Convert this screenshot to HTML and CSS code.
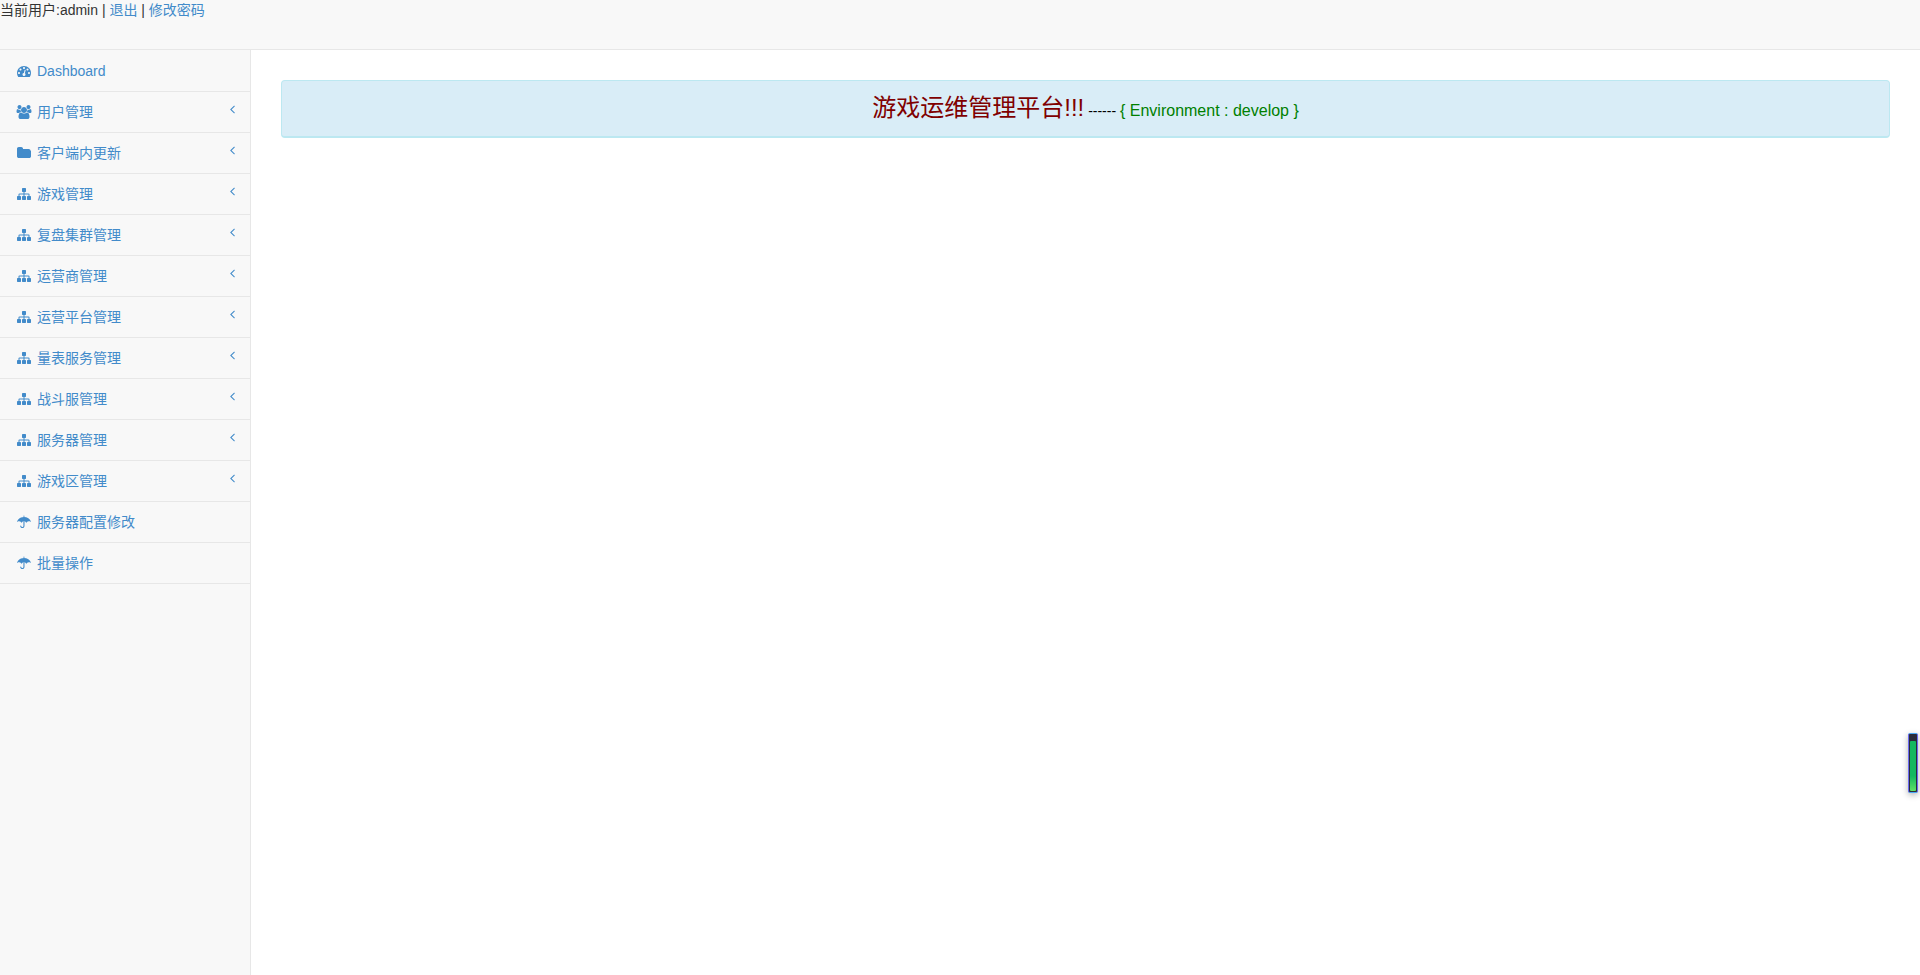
FILE: index.html
```html
<!DOCTYPE html>
<html lang="zh-CN">
<head>
<meta charset="utf-8">
<title>游戏运维管理平台</title>
<link rel="stylesheet" href="styles.css">
</head>
<body>
<svg class="sprite" aria-hidden="true">
  <symbol id="i-dashboard" viewBox="0 0 1792 1792"><path d="M384 1152q0-53-37.5-90.5t-90.5-37.5-90.5 37.5-37.5 90.5 37.5 90.5 90.5 37.5 90.5-37.5 37.5-90.5zm192-448q0-53-37.5-90.5t-90.5-37.5-90.5 37.5-37.5 90.5 37.5 90.5 90.5 37.5 90.5-37.5 37.5-90.5zm428 481l101-382q6-26-7.5-48.5t-38.5-29.5-48 6.5-30 39.5l-101 382q-60 5-107 43.5t-63 98.5q-20 77 20 146t117 89 146-20 89-117q16-60-6-117t-72-91zm660-33q0-53-37.5-90.5t-90.5-37.5-90.5 37.5-37.5 90.5 37.5 90.5 90.5 37.5 90.5-37.5 37.5-90.5zm-640-640q0-53-37.5-90.5t-90.5-37.5-90.5 37.5-37.5 90.5 37.5 90.5 90.5 37.5 90.5-37.5 37.5-90.5zm448 192q0-53-37.5-90.5t-90.5-37.5-90.5 37.5-37.5 90.5 37.5 90.5 90.5 37.5 90.5-37.5 37.5-90.5zm320 448q0 261-141 483-19 29-54 29h-1402q-35 0-54-29-141-221-141-483 0-182 71-348t191-286 286-191 348-71 348 71 286 191 191 286 71 348z"/></symbol>
  <symbol id="i-users" viewBox="0 0 1920 1792"><path d="M593 896q-162 5-265 128h-134q-82 0-138-40.5t-56-118.5q0-353 124-353 6 0 43.5 21t97.5 42.5 119 21.5q67 0 133-23-5 37-5 66 0 139 81 256zm1071 637q0 120-73 189.5t-194 69.5h-874q-121 0-194-69.5t-73-189.5q0-53 3.5-103.5t14-109 26.5-108.5 43-97.5 62-81 85.5-53.5 111.5-20q10 0 43 21.5t73 48 107 48 135 21.5 135-21.5 107-48 73-48 43-21.5q61 0 111.5 20t85.5 53.5 62 81 43 97.5 26.5 108.5 14 109 3.5 103.5zm-1024-1277q0 106-75 181t-181 75-181-75-75-181 75-181 181-75 181 75 75 181zm704 384q0 159-112.5 271.5t-271.5 112.5-271.5-112.5-112.5-271.5 112.5-271.5 271.5-112.5 271.5 112.5 112.5 271.5zm576 225q0 78-56 118.5t-138 40.5h-134q-103-123-265-128 81-117 81-256 0-29-5-66 66 23 133 23 59 0 119-21.5t97.5-42.5 43.5-21q124 0 124 353zm-128-609q0 106-75 181t-181 75-181-75-75-181 75-181 181-75 181 75 75 181z"/></symbol>
  <symbol id="i-folder" viewBox="0 0 1792 1792"><path d="M1792 608v704q0 92-66 158t-158 66h-1344q-92 0-158-66t-66-158v-960q0-92 66-158t158-66h320q92 0 158 66t66 158v32h736q92 0 158 66t66 158z"/></symbol>
  <symbol id="i-sitemap" viewBox="0 0 1792 1792"><path d="M1792 1248v320q0 40-28 68t-68 28h-320q-40 0-68-28t-28-68v-320q0-40 28-68t68-28h96v-192h-512v192h96q40 0 68 28t28 68v320q0 40-28 68t-68 28h-320q-40 0-68-28t-28-68v-320q0-40 28-68t68-28h96v-192h-512v192h96q40 0 68 28t28 68v320q0 40-28 68t-68 28h-320q-40 0-68-28t-28-68v-320q0-40 28-68t68-28h96v-192q0-52 38-90t90-38h512v-192h-96q-40 0-68-28t-28-68v-320q0-40 28-68t68-28h320q40 0 68 28t28 68v320q0 40-28 68t-68 28h-96v192h512q52 0 90 38t38 90v192h96q40 0 68 28t28 68z"/></symbol>
  <symbol id="i-umbrella" viewBox="0 0 1792 1792"><path transform="translate(0 1536) scale(1.07 -1)" d="M896 708v-580q0-104-76-180t-180-76t-180 76t-76 180q0 26 19 45t45 19t45-19t19-45q0-50 39-89t89-39t89 39t39 89v580q33 11 64 11t64-11zM1664 681q0-13-9.500-22.500t-22.500-9.500q-11 0-23 10q-49 46-93 69t-102 23q-68 0-128-37t-103-97q-7-10-17.500-28t-14.500-24q-11-17-28-17q-18 0-29 17q-4 6-14.500 24t-17.500 28q-43 60-102.500 97t-127.500 37t-127.500-37t-102.500-97q-7-10-17.500-28t-14.500-24q-11-17-29-17q-17 0-28 17q-4 6-14.500 24t-17.500 28q-43 60-103 97t-128 37q-58 0-102-23t-93-69q-12-10-23-10q-13 0-22.500 9.500t-9.500 22.500q0 5 1 7q45 183 172.500 319.500t298 204.500t360.500 68q140 0 274.500-40t246.500-113.500t194.500-187t115.500-251.500q1-2 1-7zM896 1408v-98q-42 2-64 2t-64-2v98q0 26 19 45t45 19t45-19t19-45z"/></symbol>
  <symbol id="i-angle" viewBox="592 0 640 1792"><path d="M1203 544q0 13-10 23l-393 393 393 393q10 10 10 23t-10 23l-50 50q-10 10-23 10t-23-10l-466-466q-10-10-10-23t10-23l466-466q10-10 23-10t23 10l50 50q10 10 10 23z"/></symbol>
</svg>
<div class="page">
  <header class="topbar">当前用户:admin | <a href="#">退出</a> | <a href="#">修改密码</a></header>
  <div class="body">
    <nav class="sidebar">
      <ul class="menu">
        <li><a href="#"><svg class="icon"><use href="#i-dashboard"/></svg><span class="label">Dashboard</span></a></li>
        <li><a href="#"><svg class="icon"><use href="#i-users"/></svg><span class="label">用户管理</span><svg class="arrow"><use href="#i-angle"/></svg></a></li>
        <li><a href="#"><svg class="icon"><use href="#i-folder"/></svg><span class="label">客户端内更新</span><svg class="arrow"><use href="#i-angle"/></svg></a></li>
        <li><a href="#"><svg class="icon"><use href="#i-sitemap"/></svg><span class="label">游戏管理</span><svg class="arrow"><use href="#i-angle"/></svg></a></li>
        <li><a href="#"><svg class="icon"><use href="#i-sitemap"/></svg><span class="label">复盘集群管理</span><svg class="arrow"><use href="#i-angle"/></svg></a></li>
        <li><a href="#"><svg class="icon"><use href="#i-sitemap"/></svg><span class="label">运营商管理</span><svg class="arrow"><use href="#i-angle"/></svg></a></li>
        <li><a href="#"><svg class="icon"><use href="#i-sitemap"/></svg><span class="label">运营平台管理</span><svg class="arrow"><use href="#i-angle"/></svg></a></li>
        <li><a href="#"><svg class="icon"><use href="#i-sitemap"/></svg><span class="label">量表服务管理</span><svg class="arrow"><use href="#i-angle"/></svg></a></li>
        <li><a href="#"><svg class="icon"><use href="#i-sitemap"/></svg><span class="label">战斗服管理</span><svg class="arrow"><use href="#i-angle"/></svg></a></li>
        <li><a href="#"><svg class="icon"><use href="#i-sitemap"/></svg><span class="label">服务器管理</span><svg class="arrow"><use href="#i-angle"/></svg></a></li>
        <li><a href="#"><svg class="icon"><use href="#i-sitemap"/></svg><span class="label">游戏区管理</span><svg class="arrow"><use href="#i-angle"/></svg></a></li>
        <li><a href="#"><svg class="icon"><use href="#i-umbrella"/></svg><span class="label">服务器配置修改</span></a></li>
        <li><a href="#"><svg class="icon"><use href="#i-umbrella"/></svg><span class="label">批量操作</span></a></li>
      </ul>
    </nav>
    <main class="content">
      <div class="alert"><span class="title">游戏运维管理平台!!!</span> <span class="dash">------</span> <span class="env">{ Environment : develop }</span></div>
    </main>
  </div>
</div>
<div class="meter"><div class="meter-fill"></div></div>
</body>
</html>
```
FILE: styles.css
```css
* {
  box-sizing: border-box;
}

body {
  margin: 0;
  background: #f8f8f8;
  color: #333;
  font: 14px/20px "Liberation Sans", "Noto Sans CJK SC", sans-serif;
}

a {
  color: #428bca;
  text-decoration: none;
}

.sprite {
  position: absolute;
  width: 0;
  height: 0;
}

.page {
  display: flex;
  flex-direction: column;
  min-height: 100vh;
}

.topbar {
  min-height: 50px;
  border-bottom: 1px solid #e7e7e7;
}

.body {
  display: flex;
  flex: 1;
}

.sidebar {
  flex: 0 0 250px;
}

.menu {
  margin: 0;
  padding: 1px 0 0;
  list-style: none;
}

.menu li {
  border-bottom: 1px solid #e7e7e7;
}

.menu a {
  display: flex;
  align-items: center;
  gap: 4px;
  padding: 10px 15px;
}

.icon {
  width: 18px;
  height: 14px;
  fill: currentColor;
}

.label {
  flex: 1;
}

.arrow {
  align-self: flex-start;
  width: 5px;
  height: 14px;
  fill: currentColor;
}

.content {
  flex: 1;
  padding: 30px;
  border-left: 1px solid #e7e7e7;
  background: #fff;
}

.alert {
  padding: 11px 10px 9px;
  border: 1px solid #bce8f1;
  border-bottom-width: 2px;
  border-radius: 4px;
  background: #d9edf7;
  color: #000;
  line-height: 32px;
  text-align: center;
}

.title {
  color: #800000;
  font-size: 24px;
}

.env {
  color: #008000;
  font-size: 16px;
}

.meter {
  position: fixed;
  right: 2px;
  bottom: 182px;
  display: flex;
  width: 10px;
  height: 60px;
  padding: 7px 1px 1px;
  border: 1px solid #4aa8f5;
  border-right-color: #6a6af0;
  border-left-color: #6a6af0;
  border-radius: 2px;
  background: #2b2b3a;
  box-shadow: 0 2px 6px rgba(0, 0, 0, 0.3);
}

.meter-fill {
  flex: 1;
  border-radius: 1px;
  background: linear-gradient(#14b85f 70%, #5fe066);
}
```
